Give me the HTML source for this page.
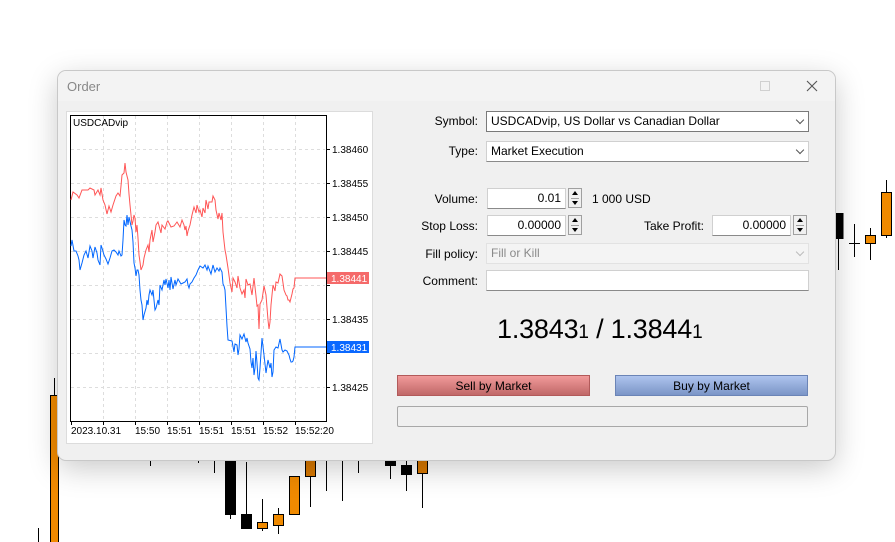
<!DOCTYPE html>
<html><head><meta charset="utf-8"><style>
*{margin:0;padding:0;box-sizing:border-box}
body{width:895px;height:542px;background:#fff;position:relative;overflow:hidden;font-family:"Liberation Sans",sans-serif;font-size:12px;color:#000}
.abs{position:absolute}
#dlg{left:58px;top:71px;width:777px;height:389px;background:#f0f0f0;border-radius:8px;box-shadow:0 0 0 1px #c8c8c8,0 8px 30px rgba(0,0,0,.22);overflow:hidden}
.title{left:0;top:0;width:100%;height:30px;background:#f3f3f3}
.lbl{text-align:right;width:120px;font-size:12px}
.box{background:#fff;border:1px solid #d0d0d0;border-bottom:1px solid #8a8a8a;height:21px;font-size:12px;line-height:19px;padding:0 4px}
.combo{border:1px solid #7a7a7a;background:#fff}
.dis{background:#f4f4f4;border:1px solid #e2e2e2;color:#8a8a8a}
.chev{position:absolute;right:5px;top:5px;width:6px;height:6px;border-right:1px solid #555;border-bottom:1px solid #555;transform:rotate(45deg)}
.spin{width:14px;height:20px;border:1px solid #a0a0a0;background:#f0f0f0}
.spin:after{content:"";position:absolute;left:2px;top:9px;width:8px;border-top:1px solid #a0a0a0}
.up{position:absolute;left:3px;top:2px;border-left:3.5px solid transparent;border-right:3.5px solid transparent;border-bottom:4px solid #000}
.dn{position:absolute;left:3px;top:12px;border-left:3.5px solid transparent;border-right:3.5px solid transparent;border-top:4px solid #000}
.btn{height:21px;text-align:center;line-height:20px;font-size:12px}
</style></head><body>
<svg class="abs" style="left:0;top:0" width="895" height="542">
<g stroke="#000" stroke-width="1">
<line x1="54.5" y1="378" x2="54.5" y2="542"/><rect x="50.5" y="395.5" width="8" height="150" fill="#f08a00"/>
<line x1="38.5" y1="528" x2="38.5" y2="542"/>
<line x1="150.5" y1="455" x2="150.5" y2="466"/><line x1="198.5" y1="455" x2="198.5" y2="463"/><line x1="214.5" y1="455" x2="214.5" y2="473"/>
<line x1="230.5" y1="455" x2="230.5" y2="519"/><rect x="225.5" y="459.5" width="10" height="55" fill="#000"/>
<line x1="246.5" y1="462" x2="246.5" y2="528"/><rect x="241.5" y="514.5" width="10" height="14" fill="#000"/>
<line x1="262.5" y1="499" x2="262.5" y2="531"/><rect x="257.5" y="522.5" width="10" height="6" fill="#f08a00"/>
<line x1="278.5" y1="508" x2="278.5" y2="534"/><rect x="273.5" y="514.5" width="10" height="11" fill="#f08a00"/>
<rect x="289.5" y="476.5" width="10" height="38" fill="#f08a00"/>
<line x1="310.5" y1="455" x2="310.5" y2="507"/><rect x="305.5" y="455.5" width="10" height="21" fill="#d87800"/>
<line x1="326.5" y1="455" x2="326.5" y2="491"/><line x1="342.5" y1="455" x2="342.5" y2="501"/><line x1="358.5" y1="455" x2="358.5" y2="473"/>
<line x1="390.5" y1="455" x2="390.5" y2="479"/><rect x="385.5" y="455.5" width="10" height="10" fill="#000"/>
<line x1="406.5" y1="455" x2="406.5" y2="491"/><rect x="401.5" y="465.5" width="10" height="9" fill="#000"/>
<line x1="422.5" y1="455" x2="422.5" y2="508"/><rect x="417.5" y="455.5" width="10" height="18" fill="#d87800"/>
<line x1="838.5" y1="213" x2="838.5" y2="270"/><rect x="835" y="213.5" width="8" height="25" fill="#000"/>
<line x1="854.5" y1="224" x2="854.5" y2="257"/><line x1="849" y1="243.5" x2="860" y2="243.5"/>
<line x1="870.5" y1="228" x2="870.5" y2="260"/><rect x="865.5" y="235.5" width="10" height="8" fill="#f08a00"/>
<line x1="886.5" y1="180" x2="886.5" y2="238"/><rect x="881.5" y="192.5" width="10" height="43" fill="#f08a00"/>
</g></svg>

<div id="dlg" class="abs">
 <div class="abs title"></div>
 <div class="abs" style="left:9px;top:8px;font-size:13px;color:#888">Order</div>
 <div class="abs" style="left:702px;top:10px;width:10px;height:10px;border:1px solid #d0d0d0"></div>
 <svg class="abs" style="left:747px;top:8px" width="14" height="14"><path d="M2 2L12 12M12 2L2 12" stroke="#555" stroke-width="1.1"/></svg>

 <div class="abs" style="left:8px;top:40px;width:307px;height:333px;background:#fff;border:1px solid #dcdcdc"></div>
 <svg class="abs" style="left:-58px;top:-71px" width="895" height="542" font-family="Liberation Sans" font-size="10">
  <g stroke="#ddd" stroke-dasharray="3,3">
   <line x1="103.5" y1="116" x2="103.5" y2="420"/><line x1="135.5" y1="116" x2="135.5" y2="420"/><line x1="167.5" y1="116" x2="167.5" y2="420"/><line x1="199.5" y1="116" x2="199.5" y2="420"/><line x1="231.5" y1="116" x2="231.5" y2="420"/><line x1="263.5" y1="116" x2="263.5" y2="420"/><line x1="295.5" y1="116" x2="295.5" y2="420"/>
   <line x1="71" y1="149.5" x2="325" y2="149.5"/><line x1="71" y1="183.5" x2="325" y2="183.5"/><line x1="71" y1="217.5" x2="325" y2="217.5"/><line x1="71" y1="251.5" x2="325" y2="251.5"/><line x1="71" y1="285.5" x2="325" y2="285.5"/><line x1="71" y1="319.5" x2="325" y2="319.5"/><line x1="71" y1="353.5" x2="325" y2="353.5"/><line x1="71" y1="387.5" x2="325" y2="387.5"/>
  </g>
  <rect x="70.5" y="115.5" width="256" height="306" fill="none" stroke="#000"/>
  <g stroke="#000"><line x1="326" y1="149.5" x2="330" y2="149.5"/><line x1="326" y1="183.5" x2="330" y2="183.5"/><line x1="326" y1="217.5" x2="330" y2="217.5"/><line x1="326" y1="251.5" x2="330" y2="251.5"/><line x1="326" y1="285.5" x2="330" y2="285.5"/><line x1="326" y1="319.5" x2="330" y2="319.5"/><line x1="326" y1="353.5" x2="330" y2="353.5"/><line x1="326" y1="387.5" x2="330" y2="387.5"/>
  <line x1="71.5" y1="421" x2="71.5" y2="425"/><line x1="103.5" y1="421" x2="103.5" y2="425"/><line x1="135.5" y1="421" x2="135.5" y2="425"/><line x1="167.5" y1="421" x2="167.5" y2="425"/><line x1="199.5" y1="421" x2="199.5" y2="425"/><line x1="231.5" y1="421" x2="231.5" y2="425"/><line x1="263.5" y1="421" x2="263.5" y2="425"/><line x1="295.5" y1="421" x2="295.5" y2="425"/></g>
  <polyline fill="none" stroke="#f55" stroke-width="1" points="71,200 73,192 77,195 79,198 82,190 88,190 90,188 94,190 95,195 98,190 100,195 101,188 103,200 105,205 107,214 109,206 111,212 113,205 116,196 118,193 120,196 121,186 122,175 124,173 125,163 126,172 128,180 129,194 130,205 131,215 132,225 133,221 134,215 135,218 136,232 137,225 138,238 139,255 140,262 141,270 143,265 144,258 146,250 148,245 149,252 150,240 152,230 153,242 155,232 156,225 158,222 161,233 162,225 165,229 167,222 168,221 171,227 174,226 177,222 180,227 182,220 184,225 185,230 186,226 187,236 188,231 190,225 192,215 194,207 196,213 197,205 199,212 200,210 202,217 203,208 205,213 206,200 208,209 209,202 212,202 213,196 215,200 216,210 218,219 219,213 221,220 222,213 223,232 225,250 226,255 228,268 230,283 232,292 233,278 235,282 237,288 238,276 240,288 242,294 244,290 245,298 246,279 248,285 250,284 252,295 254,278 256,296 257,306 258,305 259,329 260,304 262,300 264,286 266,295 268,320 269,329 270,322 271,305 273,285 275,291 276,282 278,283 280,274 282,276 284,290 286,295 287,296 288,300 289,300 290,302 292,294 293,289 294,288 295,278 326,278"/>
  <polyline fill="none" stroke="#0066ff" stroke-width="1" points="71,246 72,240 74,251 76,251 78,256 79,260 80,270 82,263 84,255 86,251 88,258 90,246 92,251 93,258 95,247 97,253 98,260 100,265 101,245 102,248 104,255 106,259 108,264 110,258 112,251 114,250 116,252 118,255 119,251 121,256 122,255 123,240 124,220 125,225 126,226 127,215 128,225 129,217 131,226 132,230 133,242 134,263 135,268 136,276 137,270 138,270 139,275 140,290 141,300 142,305 143,320 144,315 146,308 147,300 148,305 149,295 150,290 152,295 153,290 155,310 156,308 158,300 159,305 160,285 162,290 164,280 165,285 166,279 168,288 169,280 170,290 171,277 173,289 175,280 176,285 178,279 181,284 183,283 185,282 187,279 188,285 189,288 190,284 192,282 194,278 196,275 198,270 200,266 203,268 205,265 207,270 208,266 211,274 213,265 215,272 217,268 219,271 220,268 222,272 223,284 224,286 225,290 226,308 227,326 228,340 232,341 234,352 235,344 237,345 238,355 239,349 240,335 242,339 244,334 246,342 247,338 248,343 249,346 250,349 251,362 252,368 253,358 254,375 255,368 256,351 257,363 258,378 259,380 260,368 262,338 264,355 266,373 268,360 270,368 271,363 272,377 273,372 274,350 276,347 278,348 280,339 282,350 283,352 285,350 287,351 289,355 290,359 291,362 292,362 293,361 294,357 295,347 326,347"/>
  <rect x="327" y="272" width="42" height="12" fill="#f56a6a"/><text x="331" y="282" fill="#fff">1.38441</text>
  <rect x="327" y="341" width="42" height="12" fill="#0a68ff"/><text x="331" y="351" fill="#fff">1.38431</text>
  <g fill="#000"><text x="332" y="153">1.38460</text><text x="332" y="187">1.38455</text><text x="332" y="221">1.38450</text><text x="332" y="255">1.38445</text><text x="332" y="323">1.38435</text><text x="332" y="391">1.38425</text>
  <text x="73" y="126">USDCADvip</text>
  <text x="71" y="434">2023.10.31</text><text x="135" y="434">15:50</text><text x="167" y="434">15:51</text><text x="199" y="434">15:51</text><text x="231" y="434">15:51</text><text x="263" y="434">15:52</text><text x="295" y="434">15:52:20</text></g>
 </svg>

 <div class="abs lbl" style="left:300px;top:43px">Symbol:</div>
 <div class="abs box combo" style="left:428px;top:40px;width:323px">USDCADvip, US Dollar vs Canadian Dollar<span class="chev"></span></div>
 <div class="abs lbl" style="left:300px;top:73px">Type:</div>
 <div class="abs box" style="left:428px;top:70px;width:323px">Market Execution<span class="chev"></span></div>

 <div class="abs lbl" style="left:300px;top:121px">Volume:</div>
 <div class="abs box" style="left:429px;top:117px;width:79px;text-align:right">0.01</div>
 <div class="abs spin" style="left:510px;top:117px"><span class="up"></span><span class="dn"></span></div>
 <div class="abs" style="left:534px;top:121px">1 000 USD</div>

 <div class="abs lbl" style="left:300px;top:148px">Stop Loss:</div>
 <div class="abs box" style="left:429px;top:144px;width:79px;text-align:right">0.00000</div>
 <div class="abs spin" style="left:510px;top:144px"><span class="up"></span><span class="dn"></span></div>
 <div class="abs lbl" style="left:526px;top:148px">Take Profit:</div>
 <div class="abs box" style="left:654px;top:144px;width:79px;text-align:right">0.00000</div>
 <div class="abs spin" style="left:735px;top:144px"><span class="up"></span><span class="dn"></span></div>

 <div class="abs lbl" style="left:300px;top:176px">Fill policy:</div>
 <div class="abs box dis" style="left:428px;top:172px;width:323px">Fill or Kill<span class="chev" style="border-color:#bbb"></span></div>
 <div class="abs lbl" style="left:300px;top:203px">Comment:</div>
 <div class="abs box" style="left:428px;top:199px;width:323px"></div>

 <div class="abs" style="left:439px;top:243px;font-size:27px;letter-spacing:-0.2px">1.3843<span style="font-size:19px">1</span> / 1.3844<span style="font-size:19px">1</span></div>

 <div class="abs btn" style="left:339px;top:304px;width:193px;background:linear-gradient(#f19a9a,#c06868);border:1px solid #b25a5a">Sell by Market</div>
 <div class="abs btn" style="left:557px;top:304px;width:193px;background:linear-gradient(#aec4ee,#7b95c7);border:1px solid #6b84b6">Buy by Market</div>
 <div class="abs" style="left:339px;top:335px;width:411px;height:21px;border:1px solid #a8a8a8;border-radius:2px"></div>
</div>
</body></html>
